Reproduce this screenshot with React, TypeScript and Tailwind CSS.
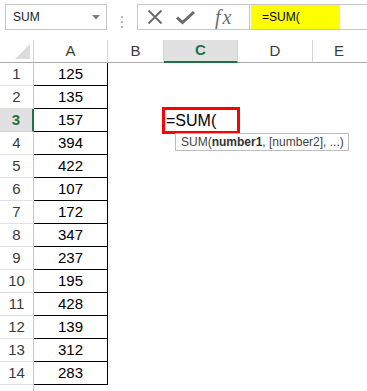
import React from "react";

const values = [125, 135, 157, 394, 422, 107, 172, 347, 237, 195, 428, 139, 312, 283];

const cols = [
  { key: "A", w: "w-[74px]" },
  { key: "B", w: "w-[56px]" },
  { key: "C", w: "w-[74px]" },
  { key: "D", w: "w-[75px]" },
];

function Toolbar() {
  return (
    <div className="flex h-[40px] pt-[4px]">
      {/* name box */}
      <div className="ml-[5px] flex h-[26px] w-[102px] items-center justify-between border border-[#c6c6c6] pl-[7px] pr-[6px]">
        <span className="text-[12px] text-[#222]">SUM</span>
        <svg width="8" height="5" viewBox="0 0 8 5">
          <path d="M0 0 L8 0 L4 4.5 Z" fill="#7a7a7a" />
        </svg>
      </div>

      {/* grip dots */}
      <div className="flex w-[30px] flex-col items-center justify-center gap-[3px]">
        <span className="h-[2px] w-[2px] bg-[#b5b5b5]" />
        <span className="h-[2px] w-[2px] bg-[#b5b5b5]" />
        <span className="h-[2px] w-[2px] bg-[#b5b5b5]" />
      </div>

      {/* formula bar */}
      <div className="-mr-[4px] flex h-[26px] min-w-0 flex-1 border border-[#c6c6c6]">
        <div className="flex w-[112px] shrink-0 items-center border-r border-[#c6c6c6]">
          <svg className="ml-[9px]" width="16" height="16" viewBox="0 0 16 16">
            <path d="M1.5 1.5 L14.5 14.5 M14.5 1.5 L1.5 14.5" stroke="#6b6b6b" strokeWidth="1.9" />
          </svg>
          <svg className="ml-[13px]" width="19" height="15" viewBox="0 0 19 15">
            <path d="M1 7.5 L6.5 12.5 L18 2" stroke="#6b6b6b" strokeWidth="3" fill="none" />
          </svg>
          <span className="ml-[20px] font-['Liberation_Serif',serif] text-[20px] italic leading-none tracking-[2px] text-[#6b6b6b]">
            fx
          </span>
        </div>
        <div className="ml-px flex w-[89px] shrink-0 items-center bg-[#ffff00] pl-[11px] text-[12px] text-black">
          =SUM(
        </div>
        <div className="flex-1" />
      </div>
    </div>
  );
}

function HeaderRow() {
  return (
    <div className="flex h-[23px]">
      <div className="flex w-[34px] shrink-0 items-end justify-end border-r border-b border-[#d4d4d4] border-b-[#ababab] pb-[3px] pr-[3px]">
        <svg width="15" height="15" viewBox="0 0 15 15">
          <path d="M15 0 L15 15 L0 15 Z" fill="#dcdcdc" />
        </svg>
      </div>
      {cols.map((c) =>
        c.key === "C" ? (
          <div
            key={c.key}
            className={`${c.w} flex shrink-0 items-center justify-center border-r border-b-2 border-r-[#d4d4d4] border-b-[#217346] bg-[#e1e1e1] text-[15px] font-bold text-[#217346]`}
          >
            {c.key}
          </div>
        ) : (
          <div
            key={c.key}
            className={`${c.w} flex shrink-0 items-center justify-center border-r border-b border-r-[#d4d4d4] border-b-[#ababab] text-[15px] text-[#3b3b3b]`}
          >
            {c.key}
          </div>
        )
      )}
      <div className="flex flex-1 items-center justify-center border-b border-[#ababab] pr-[2px] text-[15px] text-[#3b3b3b]">
        E
      </div>
    </div>
  );
}

function DataRow({ n, v }: { n: number; v: number }) {
  const active = n === 3;
  return (
    <div className="flex h-[23px]">
      {active ? (
        <div className="flex w-[34px] shrink-0 items-center justify-center border-r-2 border-b border-r-[#217346] border-b-[#d4d4d4] bg-[#e1e1e1] text-[15px] font-bold text-[#217346]">
          {n}
        </div>
      ) : (
        <div className="flex w-[34px] shrink-0 items-center justify-center border-r border-b border-r-[#c8c8c8] border-b-[#e1e1e1] text-[15px] text-[#3b3b3b]">
          {n}
        </div>
      )}
      <div className="flex w-[74px] shrink-0 items-center justify-center border-r border-b border-black text-[15px] text-black">
        {v}
      </div>
      <div className="w-[56px] shrink-0" />
      <div className="relative w-[74px] shrink-0">
        {active && (
          <>
            <div className="absolute inset-[-2px] z-10 flex items-center border-[3px] border-[#ff0000] bg-white pl-[1px] text-[16px] text-black">
              =SUM(
            </div>
            <div className="absolute left-[11px] top-[24px] z-20 flex h-[18px] w-[174px] items-center whitespace-nowrap border border-[#bdbdbd] bg-white pl-[5px] text-[12px] text-[#444]">
              SUM(<b className="font-bold text-[#333]">number1</b>, [number2], ...)
            </div>
          </>
        )}
      </div>
      <div className="flex-1" />
    </div>
  );
}

export default function App() {
  return (
    <div className="h-[391px] w-[367px] overflow-hidden bg-white font-['Liberation_Sans',Arial,sans-serif]">
      <Toolbar />
      <HeaderRow />
      {values.map((v, i) => (
        <DataRow key={i} n={i + 1} v={v} />
      ))}
      <div className="flex h-[20px]">
        <div className="w-[34px] shrink-0 border-r border-[#c8c8c8]" />
      </div>
    </div>
  );
}
